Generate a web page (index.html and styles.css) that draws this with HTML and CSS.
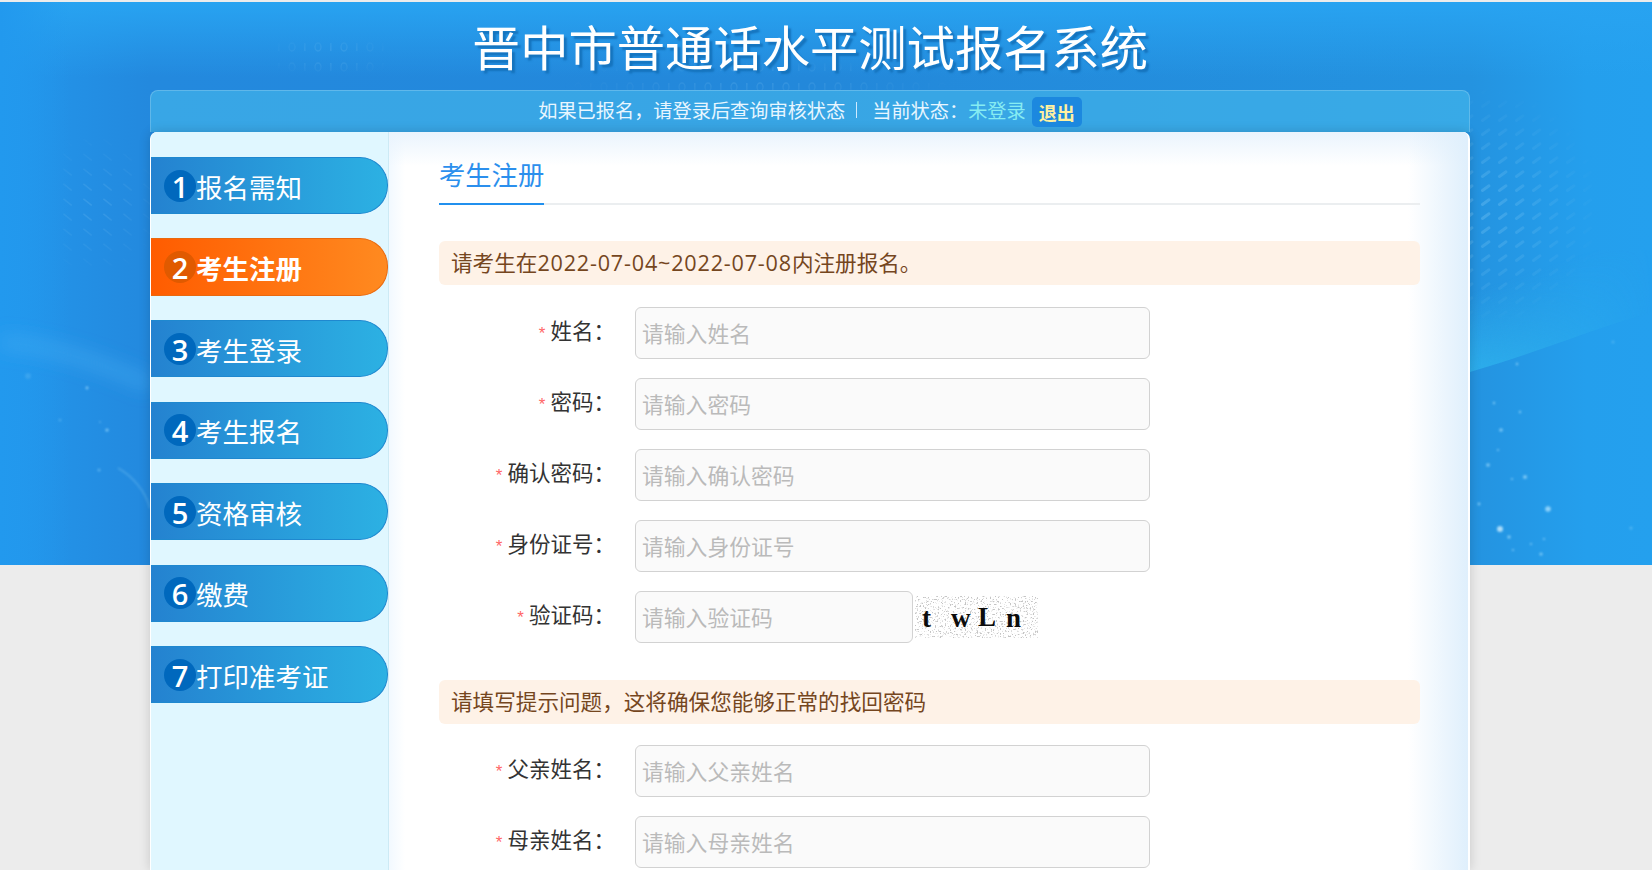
FILE: index.html
```html
<!DOCTYPE html>
<html lang="zh-CN">
<head>
<meta charset="utf-8">
<title>晋中市普通话水平测试报名系统</title>
<link rel="stylesheet" href="styles.css">
</head>
<body>
<svg class="hero-art" width="1652" height="563" viewBox="0 2 1652 563" xmlns="http://www.w3.org/2000/svg" aria-hidden="true">
  <defs>
    <linearGradient id="baseH" x1="0" x2="1" y1="0" y2="0">
      <stop offset="0" stop-color="#2397ec"/>
      <stop offset="0.09" stop-color="#2389de"/>
      <stop offset="0.5" stop-color="#2388da"/>
      <stop offset="0.89" stop-color="#2493e0"/>
      <stop offset="0.96" stop-color="#249fed"/>
      <stop offset="1" stop-color="#24a0ee"/>
    </linearGradient>
    <linearGradient id="topFade" x1="0" x2="0" y1="0" y2="1">
      <stop offset="0" stop-color="#28a3f1" stop-opacity="1"/>
      <stop offset="1" stop-color="#28a3f1" stop-opacity="0"/>
    </linearGradient>
    <linearGradient id="leftFade" x1="0" x2="1" y1="0" y2="0">
      <stop offset="0" stop-color="#2299ee" stop-opacity="1"/>
      <stop offset="1" stop-color="#2299ee" stop-opacity="0"/>
    </linearGradient>
    <linearGradient id="bandR" gradientUnits="userSpaceOnUse" x1="1560" y1="342" x2="1535" y2="270">
      <stop offset="0" stop-color="#2fb4ee" stop-opacity=".8"/>
      <stop offset="1" stop-color="#2fb4ee" stop-opacity="0"/>
    </linearGradient>
    <linearGradient id="bandFade" x1="0" x2="1" y1="0" y2="0">
      <stop offset="0" stop-color="#fff"/>
      <stop offset=".45" stop-color="#fff" stop-opacity=".55"/>
      <stop offset="1" stop-color="#fff" stop-opacity="0"/>
    </linearGradient>
    <mask id="maskBand" maskUnits="userSpaceOnUse" x="1470" y="250" width="182" height="130"><rect x="1470" y="250" width="182" height="130" fill="url(#bandFade)"/></mask>
    <pattern id="streak" width="17" height="14" patternUnits="userSpaceOnUse">
      <rect x="1" y="5" width="11" height="3" rx="1.5" fill="#7cc8f5" transform="rotate(-35 6 6)"/>
    </pattern>
    <pattern id="streakL" width="20" height="15" patternUnits="userSpaceOnUse">
      <rect x="2" y="6" width="11" height="1.5" rx=".7" fill="#8fd0f8" transform="rotate(38 7 7)"/>
    </pattern>
    <pattern id="binary" width="26" height="20" patternUnits="userSpaceOnUse">
      <ellipse cx="6" cy="7" rx="3" ry="4" fill="none" stroke="#8fd0f8" stroke-width="1.4"/>
      <rect x="18" y="3" width="1.6" height="8" fill="#8fd0f8"/>
    </pattern>
    <radialGradient id="fadeR">
      <stop offset="0" stop-color="#fff" stop-opacity=".36"/>
      <stop offset="1" stop-color="#fff" stop-opacity="0"/>
    </radialGradient>
    <radialGradient id="fadeS">
      <stop offset="0" stop-color="#fff" stop-opacity=".2"/>
      <stop offset="1" stop-color="#fff" stop-opacity="0"/>
    </radialGradient>
    <mask id="maskR"><ellipse cx="1480" cy="210" rx="125" ry="125" fill="url(#fadeR)"/></mask>
    <mask id="maskL"><ellipse cx="95" cy="205" rx="70" ry="75" fill="url(#fadeS)"/></mask>
    <mask id="maskB1"><ellipse cx="330" cy="55" rx="70" ry="24" fill="url(#fadeS)"/></mask>
    <mask id="maskB2"><ellipse cx="760" cy="80" rx="210" ry="22" fill="url(#fadeS)"/></mask>
    <filter id="soft" x="-10%" y="-150%" width="120%" height="400%"><feGaussianBlur stdDeviation="9"/></filter>
    <filter id="glow" x="-100%" y="-100%" width="300%" height="300%"><feGaussianBlur stdDeviation="1"/></filter>
  </defs>
  <rect x="0" y="2" width="1652" height="563" fill="url(#baseH)"/>
  <rect x="0" y="2" width="1652" height="75" fill="url(#topFade)"/>
  <rect x="0" y="2" width="70" height="563" fill="url(#leftFade)"/>
  <rect x="60" y="120" width="100" height="170" fill="url(#streakL)" mask="url(#maskL)"/>
  <rect x="1470" y="90" width="130" height="240" fill="url(#streak)" mask="url(#maskR)"/>
  <rect x="260" y="30" width="140" height="50" fill="url(#binary)" mask="url(#maskB1)"/>
  <rect x="550" y="60" width="420" height="30" fill="url(#binary)" mask="url(#maskB2)"/>
  <path d="M1470 372C1530 355 1590 330 1652 312V250H1470Z" fill="url(#bandR)" mask="url(#maskBand)"/>
  <path d="M0 342C50 345 100 362 150 385" fill="none" stroke="#42abf2" stroke-width="12" stroke-opacity=".6" filter="url(#soft)"/>
  <path d="M118 468C132 476 145 490 150 508" fill="none" stroke="#6cbdf0" stroke-width="1.6" stroke-opacity=".45" filter="url(#glow)"/>
  <g fill="#8fd3fa" filter="url(#glow)" opacity=".8">
    <circle cx="1500" cy="529" r="3" fill="#cfeeff"/>
    <circle cx="1548" cy="509" r="2.8" fill="#a8e0ff"/>
    <circle cx="1525" cy="477" r="2"/>
    <circle cx="1501" cy="430" r="1.8"/>
    <circle cx="1494" cy="403" r="1.2"/>
    <circle cx="1520" cy="412" r="1.2"/>
    <circle cx="1517" cy="364" r="1.2"/>
    <circle cx="1488" cy="465" r="1.8"/>
    <circle cx="1509" cy="537" r="1.7"/>
    <circle cx="1541" cy="554" r="1.6"/>
    <circle cx="1479" cy="504" r="1.4"/>
    <circle cx="1631" cy="528" r="1.6" fill-opacity=".5"/>
    <circle cx="1544" cy="539" r="1.1"/>
    <circle cx="1513" cy="550" r="1.1"/>
    <circle cx="1531" cy="544" r="1.1"/>
    <circle cx="1613" cy="342" r="1.6" fill-opacity=".4"/>
    <circle cx="1498" cy="450" r="1.1"/>
    <circle cx="1512" cy="479" r="1.1"/>
    <circle cx="28" cy="376" r="3" fill-opacity=".25"/>
    <circle cx="87" cy="388" r="1.4"/>
    <circle cx="107" cy="430" r="1.6"/>
    <circle cx="60" cy="420" r="1.5" fill-opacity=".4"/>
    <circle cx="99" cy="470" r="1.5" fill-opacity=".6"/>
    <circle cx="100" cy="422" r="1.1" fill-opacity=".5"/>
  </g>
</svg>

<div class="page">
  <h1 class="site-title">晋中市普通话水平测试报名系统</h1>

  <div class="status-bar">
    <span>如果已报名，请登录后查询审核状态</span>
    <span class="status-sep"></span>
    <span>当前状态：</span>
    <span class="status-value">未登录</span>
    <a class="logout">退出</a>
  </div>

  <div class="panel">
    <nav class="side">
      <a class="step"><span class="step-num">1</span>报名需知</a>
      <a class="step step-active"><span class="step-num">2</span>考生注册</a>
      <a class="step"><span class="step-num">3</span>考生登录</a>
      <a class="step"><span class="step-num">4</span>考生报名</a>
      <a class="step"><span class="step-num">5</span>资格审核</a>
      <a class="step"><span class="step-num">6</span>缴费</a>
      <a class="step"><span class="step-num">7</span>打印准考证</a>
    </nav>

    <main class="content">
      <div class="tabs"><span class="tab">考生注册</span></div>

      <div class="notice notice-first">请考生在<span class="date">2022-07-04~2022-07-08</span>内注册报名。</div>

      <div class="form-group">
        <div class="row"><label class="field-label"><i class="req">*</i>姓名：</label><input class="field" placeholder="请输入姓名"></div>
        <div class="row"><label class="field-label"><i class="req">*</i>密码：</label><input class="field" placeholder="请输入密码"></div>
        <div class="row"><label class="field-label"><i class="req">*</i>确认密码：</label><input class="field" placeholder="请输入确认密码"></div>
        <div class="row"><label class="field-label"><i class="req">*</i>身份证号：</label><input class="field" placeholder="请输入身份证号"></div>
        <div class="row">
          <label class="field-label"><i class="req">*</i>验证码：</label><input class="field field-code" placeholder="请输入验证码">
          <svg class="captcha" width="123" height="42" viewBox="0 0 123 42" xmlns="http://www.w3.org/2000/svg">
            <defs>
              <filter id="speckle" x="0" y="0" width="100%" height="100%">
                <feTurbulence type="fractalNoise" baseFrequency=".6" numOctaves="2" seed="7"/>
                <feColorMatrix type="matrix" values="0 0 0 0 .55  0 0 0 0 .55  0 0 0 0 .55  0 0 0 7 -4"/>
              </filter>
            </defs>
            <rect width="123" height="42" fill="#fff"/>
            <rect width="123" height="42" filter="url(#speckle)"/>
            <g class="captcha-text">
              <text x="7" y="31">t</text>
              <text x="36" y="31">w</text>
              <text x="63" y="30">L</text>
              <text x="91" y="31">n</text>
            </g>
          </svg>
        </div>
      </div>

      <div class="notice notice-second">请填写提示问题，这将确保您能够正常的找回密码</div>

      <div class="form-group">
        <div class="row"><label class="field-label"><i class="req">*</i>父亲姓名：</label><input class="field" placeholder="请输入父亲姓名"></div>
        <div class="row"><label class="field-label"><i class="req">*</i>母亲姓名：</label><input class="field" placeholder="请输入母亲姓名"></div>
      </div>
    </main>
  </div>
</div>
</body>
</html>
```

FILE: styles.css
```css
* { box-sizing: border-box; }

html, body {
  margin: 0;
  height: 870px;
  overflow: hidden;
}

body {
  position: relative;
  background: #ececec;
  font-family: "Noto Sans CJK SC", "Noto Sans", sans-serif;
  color: #333;
}

.hero-art {
  position: absolute;
  left: 0;
  top: 2px;
  display: block;
}

.page {
  position: relative;
  width: 1320px;
  margin-left: 150px;
  padding-top: 2px;
}

.site-title {
  margin: 0;
  height: 88px;
  text-align: center;
  font-size: 48.3px;
  font-weight: 400;
  line-height: 87px;
  color: #fff;
  text-shadow: 3px 3px 2px #1573bd;
}

.status-bar {
  display: flex;
  justify-content: center;
  align-items: center;
  height: 42px;
  padding-bottom: 3px;
  font-size: 19.2px;
  color: #e8f6ff;
  background: rgba(70, 185, 235, .6);
  border: 1px solid rgba(255, 255, 255, .2);
  border-bottom: 0;
  border-radius: 8px 8px 0 0;
}

.status-sep {
  width: 1px;
  height: 16px;
  margin: 0 15px 0 11px;
  background: #cfeaff;
}

.status-value { color: #86ecf2; }

.logout {
  width: 50px;
  height: 30px;
  margin: 4px 0 0 6px;
  border-radius: 5px;
  background: #1c88df;
  color: #fff0a0;
  font-size: 18px;
  font-weight: 700;
  line-height: 30px;
  text-align: center;
}

.panel {
  display: flex;
  height: 738px;
  background: #fff;
  border: solid #fff;
  border-width: 0 2px 0 1px;
  border-radius: 7px 7px 0 0;
  box-shadow: 0 0 12px rgba(0, 0, 0, .16);
  overflow: hidden;
}

.side {
  display: flex;
  flex-direction: column;
  gap: 24.5px;
  flex: none;
  width: 238px;
  padding-top: 25px;
  background: #e0f7ff;
  border-right: 1px solid #cdeaf5;
}

.step {
  display: flex;
  align-items: center;
  flex: none;
  width: 237px;
  height: 57px;
  padding: 2px 0 0 13px;
  color: #fff;
  font-size: 26.5px;
  line-height: 50px;
  background: linear-gradient(90deg, #2482d0, #2cb1e3);
  border: 1px solid #1f88cf;
  border-left: 0;
  border-radius: 0 28px 28px 0;
}

.step-active {
  height: 58px;
  margin-top: -1px;
  font-weight: 700;
  background: linear-gradient(90deg, #ff5c00, #ff8a20);
  border-color: #e9690e;
}

.step-num {
  flex: none;
  width: 32px;
  height: 32px;
  margin-bottom: 2px;
  border-radius: 50%;
  background: #0068bd;
  font-family: "Open Sans", sans-serif;
  font-size: 29px;
  font-weight: 600;
  line-height: 33px;
  text-align: center;
}

.step-active .step-num { background: #e05a00; }

.content {
  flex: 1;
  padding: 0 48px 0 50px;
  background:
    linear-gradient(270deg, #dfeffc, rgba(226, 241, 252, 0) 60px),
    linear-gradient(180deg, #eaf4fd, rgba(234, 244, 253, 0) 34px),
    linear-gradient(90deg, #f2f9ff, rgba(242, 249, 255, 0) 16px),
    #fff;
}

.tabs {
  height: 73px;
  border-bottom: 2px solid #ebeef0;
}

.tab {
  display: inline-block;
  height: 73px;
  font-size: 26.3px;
  line-height: 84px;
  color: #2b8fed;
  border-bottom: 2px solid #2190ee;
}

.notice {
  height: 44px;
  padding-left: 12px;
  border-radius: 6px;
  background: #fef2e7;
  color: #75461e;
  font-size: 21.6px;
  line-height: 42px;
}

.date {
  font-family: "Open Sans", "Noto Sans", sans-serif;
  letter-spacing: .8px;
}

.notice-first { margin: 36px 0 22px; }
.notice-second { margin: 37px 0 21px; }

.form-group {
  display: flex;
  flex-direction: column;
  gap: 19px;
}

.row {
  display: flex;
  align-items: center;
  height: 52px;
}

.field-label {
  flex: none;
  width: 176px;
  margin-right: 20px;
  padding-bottom: 3px;
  text-align: right;
  font-size: 21.5px;
  line-height: 30px;
  color: #333;
}

.req {
  margin-right: 5px;
  color: #f66;
  font-family: "Liberation Sans", sans-serif;
  font-size: 17px;
  font-style: normal;
}

.field {
  flex: none;
  width: 515px;
  height: 52px;
  padding: 0 6px 1px;
  border: 1.5px solid #d2d2d2;
  border-radius: 6px;
  background: #fafafa;
  font-family: inherit;
  font-size: 21.8px;
  outline: none;
}

.field::placeholder {
  color: #bababa;
  opacity: 1;
}

.field-code { width: 278px; }

.captcha {
  flex: none;
  display: block;
  margin-left: 2px;
}

.captcha-text {
  font-family: "Liberation Serif", serif;
  font-size: 27px;
  font-weight: 700;
  fill: #0c0c0c;
}
```
